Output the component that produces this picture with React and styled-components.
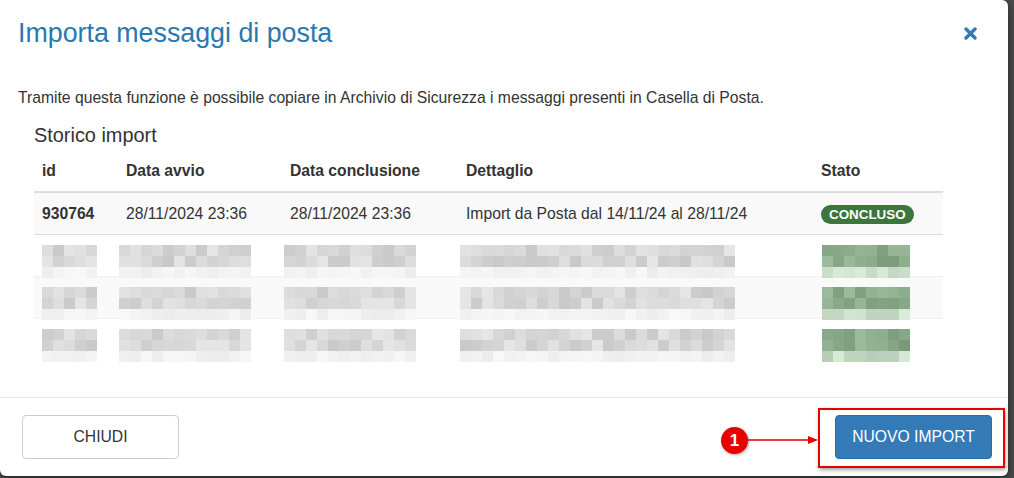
import React from 'react'
import styled, {createGlobalStyle} from "styled-components";

const GlobalStyle = createGlobalStyle`
    html, body {
        margin: 0;
        padding: 0;
        background: #4a4a4a;
        font-family: "Liberation Sans", Arial, sans-serif;
        color: #333;
    }
`;

const Page = styled.div`
    width: 1014px;
    height: 478px;
    overflow: hidden;
    position: relative;
`;

const Modal = styled.div`
    width: 1008px;
    height: 476px;
    background: #fff;
    border-radius: 0 6px 6px 6px;
    box-shadow: 0 3px 9px rgba(0, 0, 0, .5);
    display: flex;
    flex-direction: column;
`;

const Header = styled.div`
    display: flex;
    align-items: flex-start;
    justify-content: space-between;
    padding: 15px 31px 15px 18px;
`;

const Title = styled.h4`
    margin: 0;
    font-size: 26.8px;
    font-weight: normal;
    line-height: 37px;
    color: #2a78b0;
`;

const Close = styled.button`
    border: 0;
    background: none;
    padding: 0;
    margin-top: 12px;
    color: #337ab7;
    display: flex;
    cursor: pointer;
`;

const Body = styled.div`
    flex: 1;
    padding: 21px 18px 0;
    font-size: 15.7px;
    line-height: 20px;
`;

const Intro = styled.p`
    margin: 0;
`;

const History = styled.div`
    padding: 17px 0 0 16px;
`;

const SectionTitle = styled.h3`
    margin: 0 0 6px;
    font-size: 19.9px;
    font-weight: normal;
    line-height: 20px;
`;

const Row = styled.div`
    display: grid;
    grid-template-columns: 84px 164px 176px 355px 130px;
    width: 909px;
    height: 42px;
    box-sizing: border-box;
    align-items: center;
    background: ${p => p.$striped ? '#f9f9f9' : '#fff'};
    border-bottom: ${p => p.$head ? '2px solid #ddd' : `1px solid ${p.$faint ? '#f1f1f1' : '#ddd'}`};
    font-weight: ${p => p.$head ? 'bold' : 'normal'};
    &:last-child {
        border-bottom: 0;
    }
`;

const Cell = styled.div`
    padding: 0 8px;
    white-space: nowrap;
    font-weight: ${p => p.$bold ? 'bold' : 'inherit'};
`;

const Badge = styled.span`
    display: inline-block;
    background: #3c763d;
    color: #fff;
    font-size: 13.4px;
    font-weight: bold;
    line-height: 19px;
    padding: 0 8px;
    border-radius: 10px;
`;

const Mosaic = styled.div`
    display: grid;
    grid-template-columns: repeat(${p => p.$cols}, 11px);
    grid-auto-rows: 11px;
    margin-left: ${p => p.$shift}px;
    margin-top: ${p => p.$lift}px;
`;

const Pixel = styled.div`
    background: ${p => p.$color};
`;

const Footer = styled.div`
    display: flex;
    justify-content: space-between;
    align-items: center;
    border-top: 1px solid #e5e5e5;
    padding: 17px 16px 17px 22px;
`;

const Button = styled.button`
    width: 157px;
    height: 44px;
    border-radius: 4px;
    font-family: "Liberation Sans", Arial, sans-serif;
    font-size: 15.7px;
    text-transform: uppercase;
    cursor: pointer;
    border: 1px solid ${p => p.$primary ? '#2e6da4' : '#ccc'};
    background: ${p => p.$primary ? '#337ab7' : '#fff'};
    color: ${p => p.$primary ? '#fff' : '#333'};
`;

// annotazione rossa sopra al pulsante
const Highlight = styled.div`
    position: absolute;
    left: 818px;
    top: 408px;
    width: 187px;
    height: 60px;
    box-sizing: border-box;
    border: 2px solid #e60000;
    box-shadow: 1px 2px 4px rgba(0, 0, 0, .35);
`;

const Step = styled.div`
    position: absolute;
    left: 721px;
    top: 427px;
    width: 27px;
    height: 27px;
    border-radius: 50%;
    background: #e60000;
    color: #fff;
    font-size: 17px;
    font-weight: bold;
    display: flex;
    align-items: center;
    justify-content: center;
    box-shadow: 1px 1px 3px rgba(0, 0, 0, .35);
`;

const Arrow = styled.svg`
    position: absolute;
    left: 748px;
    top: 433px;
`;

// colore pseudo-casuale per le celle sfocate
const shade = (seed, green, light) => {
    let v = Math.abs(Math.sin(seed * 12.9898) * 43758.5453) % 1;
    if (green) {
        let g = Math.round((light ? 195 : 145) + v * 35);
        let d = light ? 12 : 24;
        return `rgb(${g - d}, ${g + 8}, ${g - d})`;
    }
    let c = Math.round((light ? 236 : 200) + v * (light ? 12 : 30));
    return `rgb(${c}, ${c}, ${c})`;
};

const Blur = ({cols, seed, green, shift = 0, lift = 0}) => {
    let cells = [];
    for (let i = 0; i < cols * 3; i++) {
        cells.push(<Pixel key={i} $color={shade(seed + i, green, i >= cols * 2)} />);
    }
    return <Mosaic $cols={cols} $shift={shift} $lift={lift}>{cells}</Mosaic>;
};

const blurred = [1, 2, 3];

const App = () => {
    return (
        <Page>
            <GlobalStyle />
            <Modal>
                <Header>
                    <Title>Importa messaggi di posta</Title>
                    <Close aria-label="chiudi">
                        <svg width="13" height="13" viewBox="0 0 13 13">
                            <path d="M2 2 L11 11 M11 2 L2 11" stroke="currentColor" strokeWidth="3.4" strokeLinecap="round" />
                        </svg>
                    </Close>
                </Header>
                <Body>
                    <Intro>Tramite questa funzione è possibile copiare in Archivio di Sicurezza i messaggi presenti in Casella di Posta.</Intro>
                    <History>
                        <SectionTitle>Storico import</SectionTitle>
                        <Row $head>
                            <Cell>id</Cell>
                            <Cell>Data avvio</Cell>
                            <Cell>Data conclusione</Cell>
                            <Cell>Dettaglio</Cell>
                            <Cell>Stato</Cell>
                        </Row>
                        <Row $striped>
                            <Cell $bold>930764</Cell>
                            <Cell>28/11/2024 23:36</Cell>
                            <Cell>28/11/2024 23:36</Cell>
                            <Cell>Import da Posta dal 14/11/24 al 28/11/24</Cell>
                            <Cell><Badge>CONCLUSO</Badge></Cell>
                        </Row>
                        {blurred.map(n => (
                            <Row key={n} $striped={n % 2 === 0} $faint>
                                <Cell><Blur cols={5} seed={n * 100} lift={10} /></Cell>
                                <Cell><Blur cols={12} seed={n * 200} shift={-7} lift={10} /></Cell>
                                <Cell><Blur cols={12} seed={n * 300} shift={-6} lift={10} /></Cell>
                                <Cell><Blur cols={25} seed={n * 400} shift={-6} lift={10} /></Cell>
                                <Cell><Blur cols={8} seed={n * 500} green shift={1} lift={10} /></Cell>
                            </Row>
                        ))}
                    </History>
                </Body>
                <Footer>
                    <Button>Chiudi</Button>
                    <Button $primary>Nuovo import</Button>
                </Footer>
            </Modal>
            <Step>1</Step>
            <Arrow width="70" height="14" viewBox="0 0 70 14">
                <line x1="0" y1="7" x2="62" y2="7" stroke="#e60000" strokeWidth="1.5" />
                <polygon points="70,7 60,3 60,11" fill="#e60000" />
            </Arrow>
            <Highlight />
        </Page>
    )
}

export default App;
